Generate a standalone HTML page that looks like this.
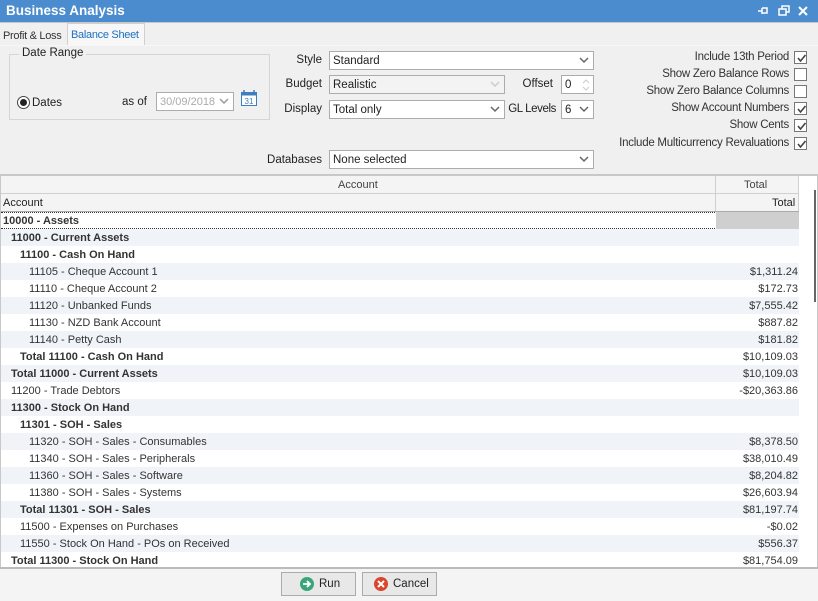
<!DOCTYPE html>
<html><head><style>
*{margin:0;padding:0;box-sizing:border-box}
body{width:818px;height:601px;background:#f0f0f0;font-family:"Liberation Sans",sans-serif;font-size:11.5px;color:#222;position:relative;overflow:hidden}
.a{position:absolute;white-space:nowrap}
.title{left:0;top:0;width:818px;height:22px;background:#4a8ccd;color:#fff;font-weight:bold;font-size:13.5px;padding:3px 6px}
.box{position:absolute;background:#fff;border:1px solid #acacac;height:19px;padding:3px 3px 0;font-size:11.5px}
.box.dis{background:#f3f3f3}
.chev{position:absolute;right:4px;top:3px;width:10px;height:10px}
.lbl{position:absolute;text-align:right;font-size:11.5px;white-space:nowrap}
.cb{position:absolute;left:794px;width:13px;height:13px;border:1px solid #777;background:#fff}
.cb svg{position:absolute;left:1px;top:1px}
.ck{letter-spacing:-0.25px;color:#333}
.row{position:absolute;left:1px;width:798px;height:17px;font-size:11px;color:#333;line-height:17px}
.row.o{background:#f0f4f9}
.row.w{background:#fff}
.row b{font-weight:bold}
.row .v{position:absolute;right:1px;top:1px}
.row .t{position:absolute;top:1px}
.btn{position:absolute;top:572px;height:24px;border:1px solid #acacac;background:#e8e8e8;font-size:11.5px;line-height:23px;text-align:center}
</style></head><body>
<div class="a title">Business Analysis</div>
<svg class="a" style="left:757px;top:6px" width="12" height="10"><path d="M1 5H5M5 2V8M5 2H10V7H5" stroke="#fff" stroke-width="1.5" fill="none"/></svg>
<svg class="a" style="left:778px;top:5px" width="12" height="12"><rect x="4" y="1" width="7" height="6" stroke="#fff" stroke-width="1.5" fill="none"/><rect x="1" y="4" width="7" height="6" stroke="#fff" stroke-width="1.5" fill="#4a8ccd"/></svg>
<svg class="a" style="left:798px;top:6px" width="10" height="10"><path d="M1 1L9 9M9 1L1 9" stroke="#fff" stroke-width="2"/></svg>
<div class="a" style="left:0;top:22px;width:818px;height:1px;background:#c8c8c8"></div>
<div class="a" style="left:3px;top:30px;font-size:11px;color:#333;letter-spacing:-0.3px">Profit &amp; Loss</div>
<div class="a" style="left:67px;top:23px;width:78px;height:22px;background:#f7f7f7;border:1px solid #d0d0d0;border-bottom:none;color:#1e6fc0;padding:5px 3px;font-size:11px;letter-spacing:-0.3px">Balance Sheet</div>
<div class="a" style="left:0;top:45px;width:818px;height:1px;background:#f7f7f7"></div>
<div class="a" style="left:9px;top:54px;width:261px;height:66px;border:1px solid #d5d5d5"></div>
<div class="a" style="left:19px;top:47px;background:#f0f0f0;padding:0 3px;font-size:11.5px">Date Range</div>
<div class="a" style="left:17px;top:96px;width:13px;height:13px;border:1px solid #444;border-radius:50%;background:#fff"><div style="position:absolute;left:2px;top:2px;width:7px;height:7px;border-radius:50%;background:#222"></div></div>
<div class="a" style="left:32px;top:97px">Dates</div>
<div class="a" style="left:122px;top:96px">as of</div>
<div class="box" style="left:156px;top:92px;width:78px;color:#aaa;font-size:11px">30/09/2018<svg class="chev" viewBox="0 0 10 10"><path d="M1 3L5 7L9 3" stroke="#999" stroke-width="1.5" fill="none"/></svg></div>
<svg class="a" style="left:240px;top:89px" width="18" height="18"><rect x="1.5" y="3.5" width="15" height="13" fill="#fff" stroke="#3f7cc0"/><rect x="1.5" y="3.5" width="15" height="3" fill="#3f7cc0"/><path d="M4 1V5M14 1V5" stroke="#3f7cc0" stroke-width="1.5"/><text x="9" y="15" font-size="8" text-anchor="middle" fill="#3f7cc0" font-family="Liberation Sans">31</text></svg>
<div class="lbl" style="right:496px;top:54px">Style</div>
<div class="box" style="left:329px;top:51px;width:265px">Standard<svg class="chev" viewBox="0 0 10 10"><path d="M1 3L5 7L9 3" stroke="#666" stroke-width="1.5" fill="none"/></svg></div>
<div class="lbl" style="right:496px;top:78px">Budget</div>
<div class="box dis" style="left:329px;top:75px;width:176px">Realistic<svg class="chev" viewBox="0 0 10 10"><path d="M1 3L5 7L9 3" stroke="#ccc" stroke-width="1.5" fill="none"/></svg></div>
<div class="lbl" style="right:265px;top:78px">Offset</div>
<div class="box" style="left:561px;top:75px;width:33px">0<svg class="a" style="right:3px;top:2px" width="8" height="14"><path d="M1 5L4 2L7 5M1 9L4 12L7 9" stroke="#ccc" fill="none"/></svg></div>
<div class="lbl" style="right:496px;top:103px">Display</div>
<div class="box" style="left:329px;top:100px;width:176px">Total only<svg class="chev" viewBox="0 0 10 10"><path d="M1 3L5 7L9 3" stroke="#666" stroke-width="1.5" fill="none"/></svg></div>
<div class="lbl" style="right:262px;top:103px;letter-spacing:-0.4px">GL Levels</div>
<div class="box" style="left:561px;top:100px;width:33px">6<svg class="chev" viewBox="0 0 10 10"><path d="M1 3L5 7L9 3" stroke="#666" stroke-width="1.5" fill="none"/></svg></div>
<div class="lbl" style="right:496px;top:154px">Databases</div>
<div class="box" style="left:329px;top:150px;width:265px">None selected<svg class="chev" viewBox="0 0 10 10"><path d="M1 3L5 7L9 3" stroke="#666" stroke-width="1.5" fill="none"/></svg></div>
<div class="lbl ck" style="right:29px;top:51px">Include 13th Period</div>
<div class="cb" style="top:51px"><svg width="11" height="11"><path d="M2 5L4.5 8L9.5 2" stroke="#444" stroke-width="1.6" fill="none"/></svg></div>
<div class="lbl ck" style="right:29px;top:68px">Show Zero Balance Rows</div>
<div class="cb" style="top:68px"></div>
<div class="lbl ck" style="right:29px;top:85px">Show Zero Balance Columns</div>
<div class="cb" style="top:85px"></div>
<div class="lbl ck" style="right:29px;top:102px">Show Account Numbers</div>
<div class="cb" style="top:102px"><svg width="11" height="11"><path d="M2 5L4.5 8L9.5 2" stroke="#444" stroke-width="1.6" fill="none"/></svg></div>
<div class="lbl ck" style="right:29px;top:119px">Show Cents</div>
<div class="cb" style="top:119px"><svg width="11" height="11"><path d="M2 5L4.5 8L9.5 2" stroke="#444" stroke-width="1.6" fill="none"/></svg></div>
<div class="lbl ck" style="right:29px;top:137px">Include Multicurrency Revaluations</div>
<div class="cb" style="top:137px"><svg width="11" height="11"><path d="M2 5L4.5 8L9.5 2" stroke="#444" stroke-width="1.6" fill="none"/></svg></div>
<div class="a" style="left:0;top:174px;width:818px;height:394px;background:#fff;border-top:2px solid #c8c8c8;border-left:1px solid #c8c8c8;border-right:1px solid #c8c8c8"></div>
<div class="a" style="left:1px;top:176px;width:798px;height:35px;background:#f4f4f4"></div>
<div class="a" style="left:1px;top:193px;width:798px;height:1px;background:#d0d0d0"></div>
<div class="a" style="left:1px;top:211px;width:798px;height:1px;background:#aaa"></div>
<div class="a" style="left:715px;top:176px;width:1px;height:35px;background:#d0d0d0"></div>
<div class="a" style="left:798px;top:176px;width:1px;height:35px;background:#d0d0d0"></div>
<div class="a" style="left:338px;top:179px;font-size:11px;color:#444">Account</div>
<div class="a" style="left:744px;top:179px;font-size:11px;color:#444">Total</div>
<div class="a" style="left:3px;top:197px;font-size:11px">Account</div>
<div class="a" style="left:772px;top:197px;font-size:11px">Total</div>
<div class="a" style="left:814px;top:190px;width:2px;height:112px;background:#666"></div>
<div class="row w" style="top:212px;border-top:1px dotted #333;border-bottom:1px dotted #333"><b class="t" style="left:2px;top:0">10000 - Assets</b><div class="a" style="left:715px;top:-1px;width:83px;height:17px;background:#cfcfcf"></div></div>
<div class="row o" style="top:229px"><b class="t" style="left:10px">11000 - Current Assets</b></div>
<div class="row w" style="top:246px"><b class="t" style="left:19px">11100 - Cash On Hand</b></div>
<div class="row o" style="top:263px"><span class="t" style="left:28px">11105 - Cheque Account 1</span><span class="v">$1,311.24</span></div>
<div class="row w" style="top:280px"><span class="t" style="left:28px">11110 - Cheque Account 2</span><span class="v">$172.73</span></div>
<div class="row o" style="top:297px"><span class="t" style="left:28px">11120 - Unbanked Funds</span><span class="v">$7,555.42</span></div>
<div class="row w" style="top:314px"><span class="t" style="left:28px">11130 - NZD Bank Account</span><span class="v">$887.82</span></div>
<div class="row o" style="top:331px"><span class="t" style="left:28px">11140 - Petty Cash</span><span class="v">$181.82</span></div>
<div class="row w" style="top:348px"><b class="t" style="left:19px">Total 11100 - Cash On Hand</b><span class="v">$10,109.03</span></div>
<div class="row o" style="top:365px"><b class="t" style="left:10px">Total 11000 - Current Assets</b><span class="v">$10,109.03</span></div>
<div class="row w" style="top:382px"><span class="t" style="left:10px">11200 - Trade Debtors</span><span class="v">-$20,363.86</span></div>
<div class="row o" style="top:399px"><b class="t" style="left:10px">11300 - Stock On Hand</b></div>
<div class="row w" style="top:416px"><b class="t" style="left:19px">11301 - SOH - Sales</b></div>
<div class="row o" style="top:433px"><span class="t" style="left:28px">11320 - SOH - Sales - Consumables</span><span class="v">$8,378.50</span></div>
<div class="row w" style="top:450px"><span class="t" style="left:28px">11340 - SOH - Sales - Peripherals</span><span class="v">$38,010.49</span></div>
<div class="row o" style="top:467px"><span class="t" style="left:28px">11360 - SOH - Sales - Software</span><span class="v">$8,204.82</span></div>
<div class="row w" style="top:484px"><span class="t" style="left:28px">11380 - SOH - Sales - Systems</span><span class="v">$26,603.94</span></div>
<div class="row o" style="top:501px"><b class="t" style="left:19px">Total 11301 - SOH - Sales</b><span class="v">$81,197.74</span></div>
<div class="row w" style="top:518px"><span class="t" style="left:19px">11500 - Expenses on Purchases</span><span class="v">-$0.02</span></div>
<div class="row o" style="top:535px"><span class="t" style="left:19px">11550 - Stock On Hand - POs on Received</span><span class="v">$556.37</span></div>
<div class="row w" style="top:552px"><b class="t" style="left:10px">Total 11300 - Stock On Hand</b><span class="v">$81,754.09</span></div>
<div class="a" style="left:0;top:567px;width:818px;height:34px;background:#f4f4f4;border-top:2px solid #bbb"></div>
<div class="btn" style="left:281px;width:75px"><svg style="position:absolute;left:18px;top:4px" width="14" height="14"><circle cx="7" cy="7" r="7" fill="#3aa57a"/><path d="M3 7H10M7 4L10 7L7 10" stroke="#fff" stroke-width="1.8" fill="none"/></svg><span style="position:absolute;left:37px">Run</span></div>
<div class="btn" style="left:362px;width:75px"><svg style="position:absolute;left:11px;top:4px" width="14" height="14"><circle cx="7" cy="7" r="7" fill="#d9452f"/><path d="M4 4L10 10M10 4L4 10" stroke="#fff" stroke-width="2"/></svg><span style="position:absolute;left:30px">Cancel</span></div>
</body></html>
